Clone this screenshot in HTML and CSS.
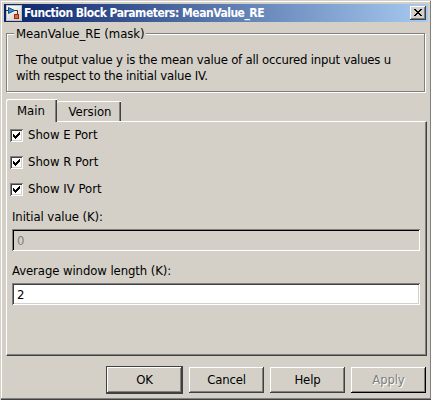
FILE: index.html
```html
<!DOCTYPE html>
<html lang="en">
<head>
<meta charset="utf-8">
<title>Function Block Parameters: MeanValue_RE</title>
<link rel="stylesheet" href="styles.css">
</head>
<body>
<main class="window">
  <header class="titlebar">
    <svg class="app-icon" width="16" height="16" viewBox="0 0 16 16">
      <defs><linearGradient id="paper" x2="0.6" y2="1"><stop offset="0" stop-color="#fff"/><stop offset="1" stop-color="#d8d5d1"/></linearGradient></defs>
      <rect x="0.500" y="0.500" width="15" height="15" fill="url(#paper)" stroke="#c4c1bc"/>
      <path d="M0 5.500H3M8 5.500H11.500V10" fill="none" stroke="#333"/>
      <path d="M2.500 2.500V8.500L8.500 5.500Z" fill="#3c91cb" stroke="#17517e"/>
      <rect x="8.500" y="9.500" width="4" height="4" fill="#e66831" stroke="#9b2c12"/>
    </svg>
    <h1 class="title">Function Block Parameters: MeanValue_RE</h1>
    <button class="close" aria-label="Close"><svg width="8" height="7" viewBox="0 0 8 7" shape-rendering="crispEdges"><path d="M0 0h2v1h1v1h2v-1h1v-1h2v1h-1v1h-1v1h-1v1h1v1h1v1h1v1h-2v-1h-1v-1h-2v1h-1v1h-2v-1h1v-1h1v-1h1v-1h-1v-1h-1v-1h-1z"/></svg></button>
  </header>
  <section class="group">
    <div class="group-frame">
      <h2 class="legend">MeanValue_RE (mask)</h2>
      <p class="description">The output value y is the mean value of all occured input values u<br>with respect to the initial value IV.</p>
    </div>
  </section>
  <nav class="tabs">
    <button class="tab tab-active">Main</button>
    <button class="tab tab-version">Version</button>
  </nav>
  <section class="panel">
    <div class="check"><span class="box"><svg width="7" height="7" viewBox="0 0 7 7" shape-rendering="crispEdges"><path d="M0 2h1v1h1v1h1v-1h1v-1h1v-1h1v-1h1v3h-1v1h-1v1h-1v1h-1v1h-1v-1h-1v-1h-1z"/></svg></span><span>Show E Port</span></div>
    <div class="check"><span class="box"><svg width="7" height="7" viewBox="0 0 7 7" shape-rendering="crispEdges"><path d="M0 2h1v1h1v1h1v-1h1v-1h1v-1h1v-1h1v3h-1v1h-1v1h-1v1h-1v1h-1v-1h-1v-1h-1z"/></svg></span><span>Show R Port</span></div>
    <div class="check"><span class="box"><svg width="7" height="7" viewBox="0 0 7 7" shape-rendering="crispEdges"><path d="M0 2h1v1h1v1h1v-1h1v-1h1v-1h1v-1h1v3h-1v1h-1v1h-1v1h-1v1h-1v-1h-1v-1h-1z"/></svg></span><span>Show IV Port</span></div>
    <div class="label">Initial value (K):</div>
    <div class="field field-disabled">0</div>
    <div class="label">Average window length (K):</div>
    <div class="field">2</div>
  </section>
  <footer class="actions">
    <button class="action action-default">OK</button>
    <button class="action">Cancel</button>
    <button class="action">Help</button>
    <button class="action action-disabled">Apply</button>
  </footer>
</main>
</body>
</html>
```
FILE: styles.css
```css
* { box-sizing: border-box; }

body {
  margin: 0;
  overflow: hidden;
  font: 13px/16px "DejaVu Sans Condensed", "DejaVu Sans", sans-serif;
  font-stretch: condensed;
  color: #000;
  white-space: nowrap;
}

button {
  margin: 0;
  padding: 0;
  font: inherit;
  letter-spacing: inherit;
  color: inherit;
  background: #d4d0c8;
}

.window {
  width: 431px;
  height: 400px;
  padding: 4px 3px 0 4px;
  background: #d4d0c8;
  box-shadow: inset 1px 1px #d4d0c8, inset 0 -1px #404040, inset -1px -2px #808080, inset 2px 2px #fff;
}

.titlebar {
  display: flex;
  align-items: center;
  height: 18px;
  padding: 0 2px;
  background: linear-gradient(90deg, #0a246a, #a6caf0);
}

.app-icon { margin-right: 2px; }

.title {
  flex: 1;
  margin: 0;
  font-size: 12px;
  line-height: 16px;
  font-weight: bold;
  letter-spacing: -0.49px;
  color: #fff;
}

.close {
  display: flex;
  align-items: center;
  justify-content: center;
  width: 16px;
  height: 14px;
  border: 0;
  padding: 0 1px 1px 0;
  box-shadow: inset -1px -1px #404040, inset 1px 1px #fff, inset -2px -2px #808080;
}

.group { margin: 11px 2px 0; }

.group-frame {
  width: 419px;
  height: 59px;
  border: 1px solid #808080;
  box-shadow: inset 1px 1px #fff, 1px 1px #fff;
}

.legend {
  width: 132px;
  height: 16px;
  margin: -8px 0 0 7px;
  padding-left: 2px;
  font-size: 13px;
  line-height: 16px;
  font-weight: normal;
  letter-spacing: -0.05px;
  background: #d4d0c8;
}

.description {
  margin: 10px 0 0 9px;
  letter-spacing: -0.2px;
}

.tabs {
  display: flex;
  align-items: flex-end;
  height: 22px;
  margin: 7px 2px 0;
}

.tab {
  border: 0;
  border-radius: 2px 0 0 0;
}

.tab-active {
  position: relative;
  width: 51px;
  height: 23px;
  margin-bottom: -1px;
  padding-right: 1px;
  box-shadow: inset 1px 1px #fff, inset -1px 0 #404040, inset -2px 0 #808080;
}

.tab-version {
  width: 64px;
  height: 20px;
  padding: 2px 0 0 2px;
  box-shadow: inset 0 1px #fff, inset -1px 0 #404040, inset -2px 0 #808080;
}

.panel {
  height: 235px;
  margin: 0 1px 0 2px;
  padding: 5px 6px 0;
  border: solid;
  border-width: 1px;
  border-color: #fff #404040 #404040 #fff;
  box-shadow: inset -1px -1px #808080;
}

.check {
  display: flex;
  align-items: flex-start;
  height: 16px;
  margin: 0 0 11px -3px;
}

.box {
  display: flex;
  align-items: center;
  justify-content: center;
  width: 13px;
  height: 13px;
  margin: 2px 5px 0 0;
  background: #fff;
  box-shadow: inset 1px 1px #808080, inset -1px -1px #fff, inset 2px 2px #404040, inset -2px -2px #d4d0c8;
}

.label {
  height: 21px;
  margin-left: -1px;
  letter-spacing: -0.09px;
}

.check + .label { padding-top: 1px; }

.field + .label { height: 20px; }

.field {
  width: 408px;
  height: 22px;
  margin: 0 0 12px -1px;
  padding: 4px 5px 0;
  background: #fff;
  box-shadow: inset 1px 1px #808080, inset -1px -1px #fff, inset 2px 2px #404040, inset -2px -2px #d4d0c8;
}

.field-disabled {
  color: #808080;
  background: #d4d0c8;
  box-shadow: inset 1px 1px #808080, inset -1px -1px #fff, inset 2px 2px #000;
}

.actions {
  display: flex;
  justify-content: flex-end;
  align-items: center;
  gap: 6px;
  height: 28px;
  margin: 10px 2px 0;
}

.action {
  width: 75px;
  height: 26px;
  border: 0;
  letter-spacing: -0.15px;
  box-shadow: inset -1px -1px #404040, inset 1px 1px #fff, inset -2px -2px #808080;
}

.action-default {
  width: 77px;
  height: 28px;
  border: 1px solid #404040;
}

.action-disabled {
  color: #808080;
  text-shadow: 1px 1px #fff;
  box-shadow: inset -1px -1px #000, inset 1px 1px #fff, inset -2px -2px #808080;
}
```
